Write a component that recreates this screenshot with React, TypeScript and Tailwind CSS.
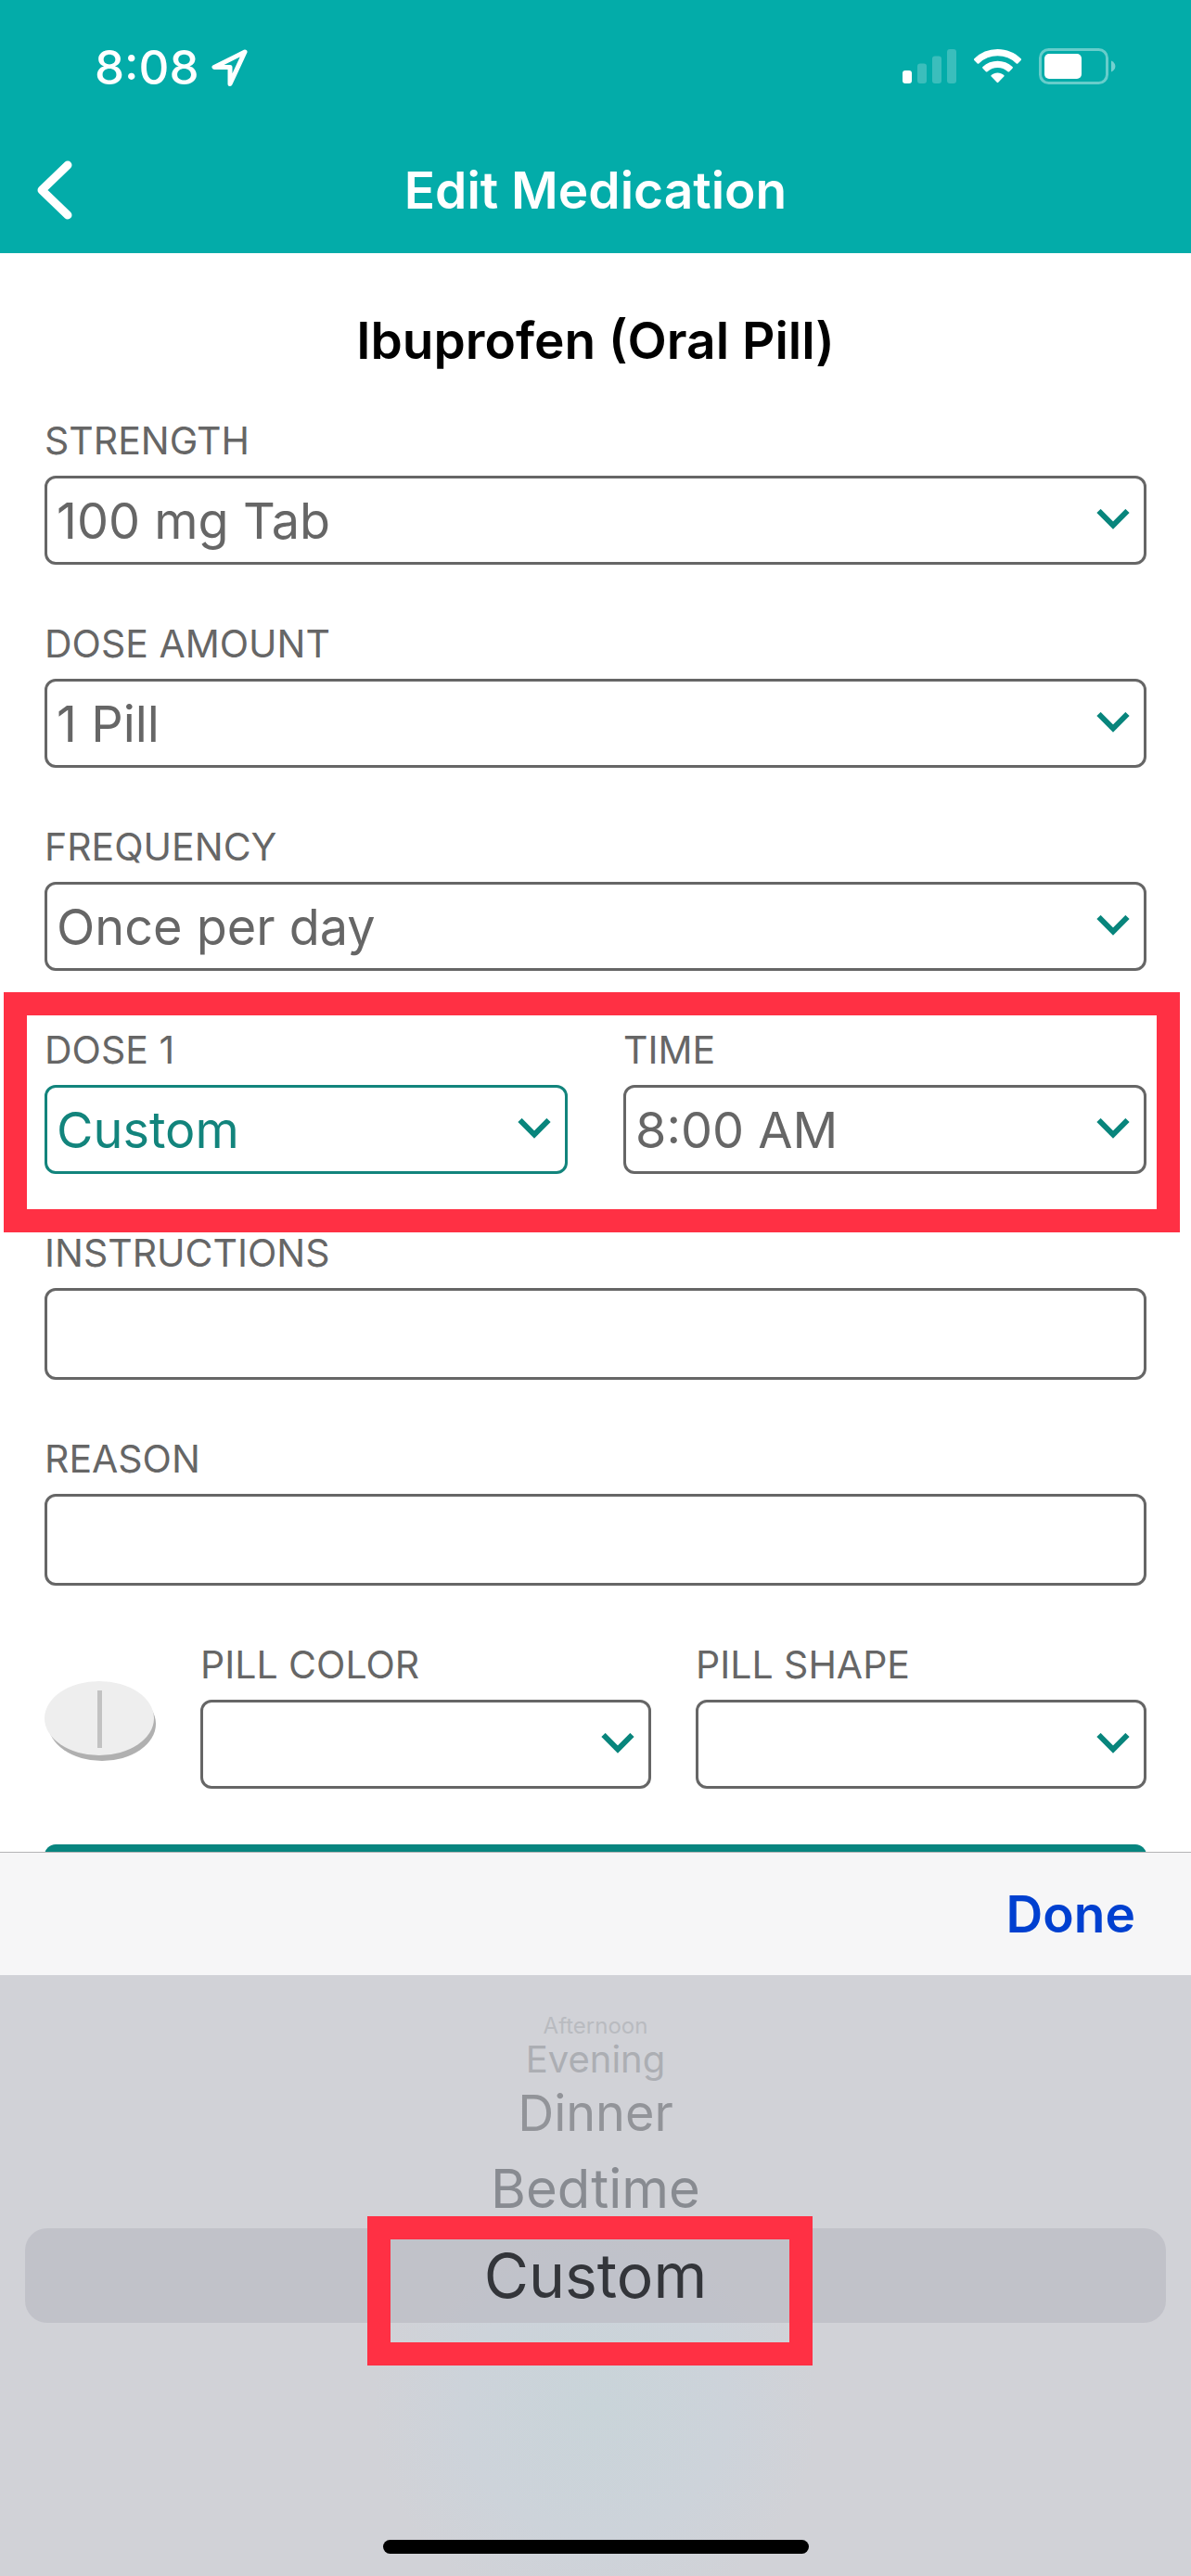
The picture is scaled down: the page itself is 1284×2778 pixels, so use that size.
import * as React from "react";

type Option = { label: string; className: string };

// Rows shrink and fade towards the top of the wheel.
const PICKER_OPTIONS: Option[] = [
  { label: "Afternoon", className: "h-[34px] text-[24px] leading-[34px] text-[#b9bbc0]" },
  { label: "Evening", className: "h-[38px] text-[40px] leading-[38px] text-[#acaeb3]" },
  { label: "Dinner", className: "h-[77px] text-[54px] leading-[77px] text-[#929499]" },
  { label: "Bedtime", className: "h-[86px] text-[58px] leading-[86px] text-[#888b91]" },
];

function Field({
  id,
  label,
  children,
}: {
  id: string;
  label: string;
  children: React.ReactNode;
}) {
  return (
    <div className="min-w-0 flex-1">
      <label
        htmlFor={id}
        className="mb-[13px] block text-[41px] leading-[50px] whitespace-nowrap text-[#666666] uppercase"
      >
        {label}
      </label>
      {children}
    </div>
  );
}

function SelectField({
  id,
  label,
  value,
  active = false,
}: {
  id: string;
  label: string;
  value: string;
  active?: boolean;
}) {
  const tone = active
    ? "border-[#12847c] text-[#12847c]"
    : "border-[#666666] text-[#666666]";
  return (
    <Field id={id} label={label}>
      <div className="relative">
        <select
          id={id}
          defaultValue={value}
          className={`block h-24 w-full appearance-none rounded-xl border-3 bg-white pr-16 pl-[10px] text-[54px] outline-none ${tone}`}
        >
          <option value={value}>{value}</option>
        </select>
        <svg
          viewBox="0 0 36 22"
          className="pointer-events-none absolute top-9 right-[18px] h-[22px] w-9"
          aria-hidden="true"
        >
          <path d="M2.5 2 18 17.500 33.5 2" fill="none" stroke="#08857c" strokeWidth="6" />
        </svg>
      </div>
    </Field>
  );
}

function TextField({ id, label }: { id: string; label: string }) {
  return (
    <Field id={id} label={label}>
      <input
        id={id}
        type="text"
        className="block h-[99px] w-full rounded-xl border-3 border-[#666666] bg-white px-[10px] text-[54px] text-[#666666] outline-none"
      />
    </Field>
  );
}

function StatusBar() {
  return (
    <div className="flex h-[146px] items-center justify-between pr-20 pl-[102px]">
      <div className="flex items-center gap-3">
        <span className="text-[51px] leading-[60px] font-medium">8:08</span>
        <svg viewBox="0 0 40 42" className="h-[42px] w-10" aria-hidden="true">
          <path
            d="M37 4 4 20.500h17V38.500Z"
            fill="none"
            stroke="currentColor"
            strokeWidth="5"
            strokeLinejoin="round"
          />
        </svg>
      </div>
      <svg viewBox="0 0 231 42" className="h-[42px] w-[231px]" aria-hidden="true">
        <g fill="#fff">
          <rect x="0" y="24" width="10" height="14" rx="3" />
          <g opacity="0.22">
            <rect x="16" y="16.500" width="10" height="21.500" rx="3" />
            <rect x="32" y="8.500" width="10" height="29.500" rx="3" />
            <rect x="48" y="1" width="10" height="37" rx="3" />
          </g>
          <path d="M102.500 1c9.600 0 18.500 3.700 25.200 10.200.5.500.5 1.200 0 1.700l-3.400 3.500c-.4.400-1.100.4-1.600 0a29 29 0 0 0-40.400 0c-.5.400-1.200.4-1.600 0l-3.400-3.500c-.5-.5-.5-1.200 0-1.700A36 36 0 0 1 102.500 1Z" />
          <path d="M102.500 13.800c5.900 0 11.600 2.200 16 6.300.5.400.5 1.200 0 1.600l-3.400 3.500c-.4.500-1.100.5-1.600 0a16.200 16.200 0 0 0-22 0c-.5.500-1.200.5-1.600 0l-3.400-3.500c-.5-.4-.5-1.200 0-1.600 4.400-4.100 10.100-6.300 16-6.300Z" />
          <path d="M102.500 26.400c2.500 0 4.900.9 6.800 2.500.5.500.5 1.200 0 1.700l-6 6.200c-.4.500-1.200.5-1.600 0l-6-6.200c-.5-.5-.5-1.200 0-1.700 1.900-1.600 4.300-2.500 6.800-2.500Z" />
          <rect x="153" y="6" width="40" height="27" rx="5" />
          <path d="M225 13.500c2.700 1.100 4.400 3.300 4.400 6s-1.700 4.900-4.400 6Z" opacity="0.450" />
        </g>
        <rect
          x="148.500"
          y="1.500"
          width="72"
          height="36"
          rx="9"
          fill="none"
          stroke="#fff"
          strokeOpacity="0.400"
          strokeWidth="3"
        />
      </svg>
    </div>
  );
}

function PillIcon() {
  return (
    <svg viewBox="0 0 120 86" className="mt-[43px] h-[86px] w-[120px] shrink-0" aria-hidden="true">
      <ellipse cx="62" cy="46" rx="58" ry="40" fill="#b0b0b0" />
      <ellipse cx="59" cy="40" rx="59" ry="40" fill="#eeeeee" />
      <rect x="57" y="10" width="5" height="62" fill="#c2c2c2" />
    </svg>
  );
}

function DosePicker() {
  return (
    <section className="shrink-0 border-t border-[#b4b4b6]">
      <div className="flex h-[132px] items-center justify-end bg-[#f6f6f7] px-[60px]">
        <button type="button" className="text-[55px] leading-[64px] font-semibold text-[#0040d0]">
          Done
        </button>
      </div>
      <div className="flex h-[648px] flex-col justify-between bg-[#d1d2d7] bg-[radial-gradient(ellipse_240px_230px_at_50%_72%,#c9d4d9,#cdd3da_60%,transparent)] pt-[38px] pb-6">
        <ul role="listbox" aria-label="Dose 1" className="flex flex-col items-center">
          {PICKER_OPTIONS.map((option) => (
            <li key={option.label} role="option" aria-selected={false} className={option.className}>
              {option.label}
            </li>
          ))}
          <li
            role="option"
            aria-selected={true}
            className="relative h-[102px] w-full px-[27px] text-center text-[66px] leading-[102px] text-[#33353a]"
          >
            <div className="rounded-3xl bg-[#bbbbc3]/70">Custom</div>
            <div className="pointer-events-none absolute -top-[13px] left-1/2 -ml-[246px] h-[161px] w-[480px] border-[25px] border-[#ff3044]" />
          </li>
        </ul>
        <div className="h-[15px] w-[459px] self-center rounded-full bg-black" />
      </div>
    </section>
  );
}

export default function App() {
  return (
    <div className="flex h-screen flex-col bg-white font-[Inter,sans-serif]">
      <header className="shrink-0 bg-[#03aca9] pb-[9px] text-white">
        <StatusBar />
        <div className="grid h-[118px] grid-cols-[1fr_auto_1fr] items-center px-10">
          <button type="button" aria-label="Back" className="justify-self-start">
            <svg viewBox="0 0 38 64" className="h-16 w-[38px]" aria-hidden="true">
              <path
                d="M33 5 5 32l28 27"
                fill="none"
                stroke="currentColor"
                strokeWidth="9"
                strokeLinecap="round"
                strokeLinejoin="round"
              />
            </svg>
          </button>
          <h1 className="text-[55px] leading-[60px] font-semibold">Edit Medication</h1>
        </div>
      </header>

      <main className="min-h-0 flex-1 overflow-hidden px-12 pt-16">
        <h2 className="mb-[53px] text-center text-[55px] leading-[60px] font-semibold text-black">
          Ibuprofen (Oral Pill)
        </h2>
        <form className="flex flex-col gap-[60px]">
          <SelectField id="strength" label="Strength" value="100 mg Tab" />
          <SelectField id="amount" label="Dose amount" value="1 Pill" />
          <SelectField id="frequency" label="Frequency" value="Once per day" />
          <div className="relative flex gap-[60px]">
            <SelectField id="dose" label="Dose 1" value="Custom" active />
            <SelectField id="time" label="Time" value="8:00 AM" />
            <div className="pointer-events-none absolute -top-[37px] -right-9 -bottom-[63px] -left-11 border-[25px] border-[#ff3044]" />
          </div>
          <TextField id="instructions" label="Instructions" />
          <TextField id="reason" label="Reason" />
          <div className="flex gap-12">
            <PillIcon />
            <SelectField id="color" label="Pill color" value="" />
            <SelectField id="shape" label="Pill shape" value="" />
          </div>
          <button type="submit" aria-label="Save" className="h-24 w-full rounded-xl bg-[#08857f]" />
        </form>
      </main>

      <DosePicker />
    </div>
  );
}
